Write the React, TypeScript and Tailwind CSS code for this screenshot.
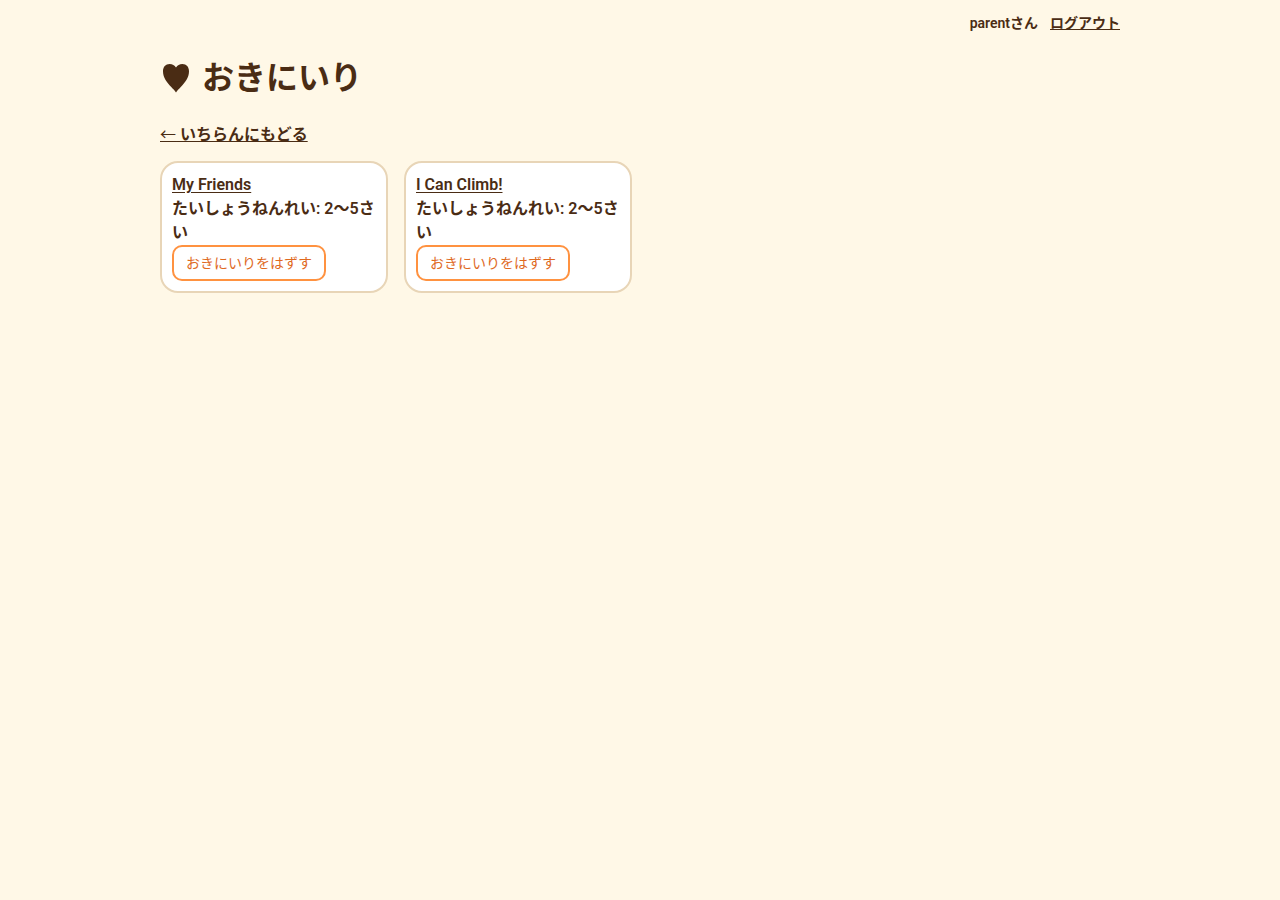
const books = [
  { title: 'My Friends', age: '2〜5さい' },
  { title: 'I Can Climb!', age: '2〜5さい' },
];

function Heart() {
  return (
    <svg viewBox="0 0 32 32" className="mt-2 size-8 shrink-0" fill="currentColor" role="img" aria-label="♥">
      <path d="M16 30.5C15 28.8 13.2 27.2 11 24.8C7.2 20.6 3 15.6 3 9.4C3 5 5.6 2 9.6 2C12.4 2 14.7 3.3 16 5.4C17.3 3.3 19.6 2 22.4 2C26.4 2 29 5 29 9.4C29 15.6 24.8 20.6 21 24.8C18.8 27.2 17 28.8 16 30.5Z" />
    </svg>
  );
}

export default function App() {
  return (
    <div className="min-h-screen bg-[#fff8e7] font-['Roboto','Noto_Sans_CJK_JP',sans-serif] text-base leading-6 font-semibold text-[#4a2c14]">
      <div className="mx-auto max-w-[960px]">
        <header className="flex items-center justify-end gap-3 pt-[13px] text-sm">
          <span>parentさん</span>
          <a href="#logout" className="underline">ログアウト</a>
        </header>
        <main className="pt-[21px]">
          <h1 className="flex gap-2.5 text-[32px] leading-12 font-bold">
            <Heart />
            <span>おきにいり</span>
          </h1>
          <p className="mt-[19px]">
            <a href="#list" className="underline">
              <span className="font-['Noto_Sans_CJK_JP',sans-serif] font-normal">←</span> いちらんにもどる
            </a>
          </p>
          <ul className="mt-3.5 grid grid-cols-[repeat(auto-fill,minmax(220px,1fr))] gap-4">
            {books.map((book) => (
              <li key={book.title} className="rounded-[18px] border-2 border-[#e8d5b7] bg-white p-2.5">
                <a href="#book" className="underline underline-offset-2">{book.title}</a>
                <p>たいしょうねんれい: {book.age}</p>
                <button type="button" className="block h-9 rounded-[10px] border-2 border-[#ff9240] px-3 text-sm font-normal text-[#e06a1f]">
                  おきにいりをはずす
                </button>
              </li>
            ))}
          </ul>
        </main>
      </div>
    </div>
  );
}
